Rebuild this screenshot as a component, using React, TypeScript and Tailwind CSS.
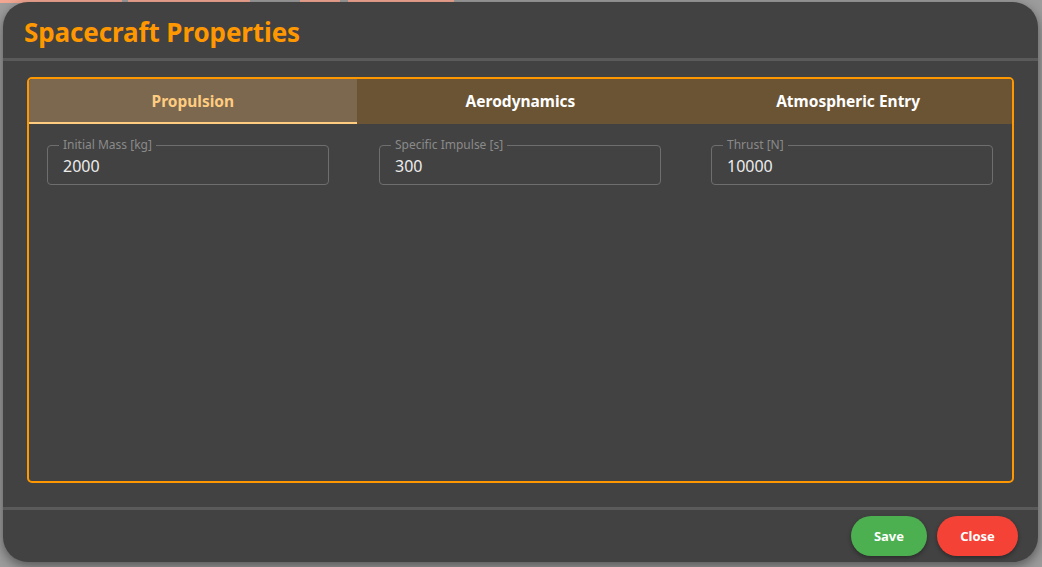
import React from "react";

const font = { fontFamily: '"Noto Sans", "Open Sans", sans-serif' };

function Field({ label, value }: { label: string; value: string }) {
  return (
    <div className="relative h-[40px] rounded-[4px] border border-[#6e6e6e] flex items-center pl-[15px]">
      <span className="absolute top-[-8px] left-[11px] px-[4px] bg-[#424242] text-[12px] leading-[14px] text-[#8a8a8a]">{label}</span>
      <span className="text-[16px] leading-[22px] text-[#ececec] pt-[2px]">{value}</span>
    </div>
  );
}

export default function App() {
  return (
    <div className="w-[1042px] h-[567px] bg-[#9c9c9c] relative overflow-hidden" style={font}>
      <div className="absolute left-0 top-0 h-[3px] w-[122px] bg-[#f2a792]" />
      <div className="absolute left-[128px] top-0 h-[3px] w-[122px] bg-[#f2a792]" />
      <div className="absolute left-[300px] top-0 h-[3px] w-[40px] bg-[#f2a792]" />
      <div className="absolute left-[348px] top-0 h-[3px] w-[106px] bg-[#f2a792]" />
      <div className="relative pt-[2px] pl-[3px] pr-[4px] pb-[5px] h-full">
        <div className="flex flex-col h-full rounded-[25px] bg-[#424242] shadow-[0_4px_12px_rgba(0,0,0,0.45)] overflow-hidden">
          <div className="h-[56px] flex items-center px-[21px] pt-[4px] shrink-0">
            <h1 className="text-[26px] font-bold text-[#ff9800] leading-none tracking-[-0.1px]">Spacecraft Properties</h1>
          </div>
          <div className="h-[3px] bg-[#5a5a5a] shrink-0" />
          <div className="flex-1 px-[24px] pt-[16px] pb-[24px] min-h-0">
            <div className="h-full rounded-[5px] border-2 border-[#ff9800] flex flex-col overflow-hidden">
              <div className="grid grid-cols-3 h-[45px] shrink-0">
                <div className="bg-[#7b684f] flex items-center justify-center border-b-2 border-[#ffcc80]">
                  <span className="text-[15.5px] font-bold text-[#ffcc80] pt-[2px]">Propulsion</span>
                </div>
                <div className="bg-[#6b5434] flex items-center justify-center">
                  <span className="text-[15.5px] font-bold text-white">Aerodynamics</span>
                </div>
                <div className="bg-[#6b5434] flex items-center justify-center">
                  <span className="text-[15.5px] font-bold text-white">Atmospheric Entry</span>
                </div>
              </div>
              <div className="grid grid-cols-3 gap-[50px] pl-[18px] pr-[19px] pt-[21px]">
                <Field label="Initial Mass [kg]" value="2000" />
                <Field label="Specific Impulse [s]" value="300" />
                <Field label="Thrust [N]" value="10000" />
              </div>
            </div>
          </div>
          <div className="h-[3px] bg-[#5a5a5a] shrink-0" />
          <div className="h-[52px] flex items-center justify-end gap-[10px] pr-[20px] shrink-0">
            <button className="h-[40px] w-[76px] rounded-full bg-[#4caf50] text-white text-[13px] font-bold pt-[2px] shadow-[0_2px_4px_rgba(0,0,0,0.35)]">Save</button>
            <button className="h-[40px] w-[81px] rounded-full bg-[#f44336] text-white text-[13px] font-bold pt-[2px] shadow-[0_2px_4px_rgba(0,0,0,0.35)]">Close</button>
          </div>
        </div>
      </div>
    </div>
  );
}
